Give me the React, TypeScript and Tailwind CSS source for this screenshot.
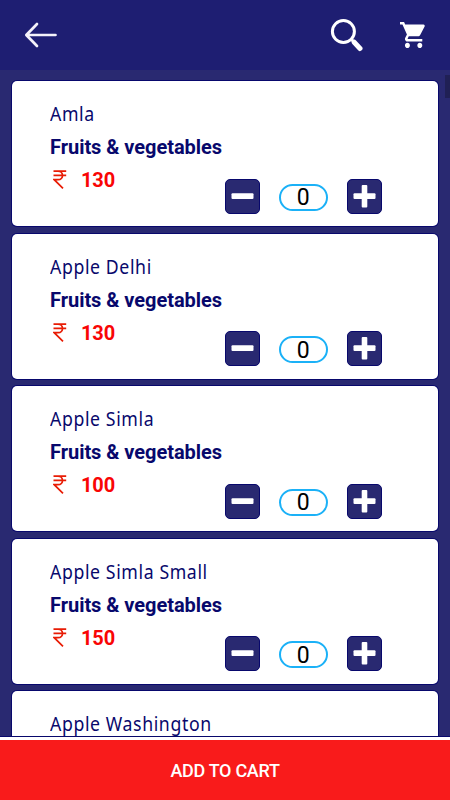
const products: { name: string; price?: number }[] = [
  { name: "Amla", price: 130 },
  { name: "Apple Delhi", price: 130 },
  { name: "Apple Simla", price: 100 },
  { name: "Apple Simla Small", price: 150 },
  { name: "Apple Washington" },
];

function StepButton({ plus }: { plus?: boolean }) {
  return (
    <button
      aria-label={plus ? "Increase" : "Decrease"}
      className="h-[35px] w-[35px] shrink-0 rounded-[5px] border border-[#08086c] bg-[#292971]"
    >
      <svg viewBox="0 0 33 33" className="block h-full w-full" fill="#fff">
        <rect x="5.5" y="13.3" width="22" height="5.6" rx="1" />
        {plus && <rect x="13.7" y="5" width="5.6" height="22.4" rx="1" />}
      </svg>
    </button>
  );
}

function Rupee() {
  return (
    <svg
      viewBox="0 0 14 20"
      className="ml-[3px] h-5 w-[14px] shrink-0"
      fill="none"
      stroke="#e81c05"
      strokeWidth="1.7"
    >
      <path d="M0.5 1.2H13.2M0.5 5.4H13.2M1 1.2H5C11 1.2 11 9.7 5 9.7H1.2L10 18.4" />
    </svg>
  );
}

function Card({ name, price }: { name: string; price?: number }) {
  return (
    <article className="h-[145px] shrink-0 rounded-[5px] bg-white pl-[38px] pt-[18px] shadow-[0_0_0_1px_#08086c]">
      <h2 className="h-[30px] w-[240px] origin-left scale-x-[0.885] font-['Noto_Sans',sans-serif] text-[20px] leading-[30px] tracking-[0.68px] text-[#08086c]">
        {name}
      </h2>
      {price !== undefined && (
        <>
          <p className="mt-[6px] text-[20px] leading-[24px] font-bold tracking-[-0.04px] text-[#08086c]">
            Fruits &amp; vegetables
          </p>
          <div className="flex">
            <div className="flex w-[174.5px] items-center self-start pt-[10px]">
              <Rupee />
              <span className="ml-[14px] text-[20px] leading-[22px] font-bold tracking-[-0.1px] text-[#f90505]">
                {price}
              </span>
            </div>
            <div className="flex items-center pt-[19.5px]">
              <StepButton />
              <span className="mt-[2px] ml-[19px] flex h-[27px] w-[49.5px] items-center justify-center rounded-full border-2 border-[#1bb1f7] pt-px text-[23px] leading-none text-black">
                0
              </span>
              <div className="ml-[19px] flex">
                <StepButton plus />
              </div>
            </div>
          </div>
        </>
      )}
    </article>
  );
}

export default function App() {
  return (
    <div className="flex h-[800px] w-[450px] flex-col overflow-hidden bg-white font-[Roboto,sans-serif]">
      <header className="flex h-[70px] shrink-0 items-center bg-[#1e1e72]">
        <svg
          viewBox="0 0 34 26"
          className="ml-[24px] h-[26px] w-[34px]"
          fill="none"
          stroke="#f4f2fa"
          strokeWidth="2.7"
          strokeLinecap="round"
          strokeLinejoin="round"
        >
          <path d="M31.5 13H2.5M13 2L2.3 13L13 24" />
        </svg>
        <svg
          viewBox="0 0 34 34"
          className="ml-[272px] h-[34px] w-[34px]"
          fill="none"
          stroke="#fff"
          strokeLinecap="round"
        >
          <circle cx="13.4" cy="13.5" r="11" strokeWidth="3" />
          <path d="M21.5 21.5L24 24" strokeWidth="3" />
          <path d="M24.2 24.2L30 30.5" strokeWidth="5" />
        </svg>
        <svg viewBox="1 2 21 20" className="ml-[36px] h-[26px] w-[26px]" preserveAspectRatio="none" fill="#fff">
          <path d="M7 18c-1.1 0-1.99.9-1.99 2S5.9 22 7 22s2-.9 2-2-.9-2-2-2zM1 2v2h2l3.6 7.59-1.35 2.45c-.16.28-.25.61-.25.96 0 1.1.9 2 2 2h12v-2H7.42c-.14 0-.25-.11-.25-.25l.03-.12.9-1.63h7.45c.75 0 1.41-.41 1.75-1.03l3.58-6.49A1 1 0 0 0 20 4H5.21l-.94-2H1zm16 16c-1.1 0-1.99.9-1.99 2s.89 2 1.99 2 2-.9 2-2-.9-2-2-2z" />
        </svg>
      </header>
      <main className="flex h-[667px] shrink-0 overflow-hidden border-b border-[#08086c] bg-[#292971] pt-[11.4px] pl-3">
        <div className="flex w-[426px] shrink-0 flex-col gap-[7.5px]">
          {products.map((p) => (
            <Card key={p.name} {...p} />
          ))}
        </div>
        <div className="mt-[-6.4px] ml-[7px] h-[23px] w-[5px] shrink-0 bg-[#202055]" />
      </main>
      <button className="mt-[3px] h-[60px] w-full shrink-0 bg-[#f91b1b] pt-px text-[18px] font-medium tracking-[-0.3px] text-white">
        ADD TO CART
      </button>
    </div>
  );
}
